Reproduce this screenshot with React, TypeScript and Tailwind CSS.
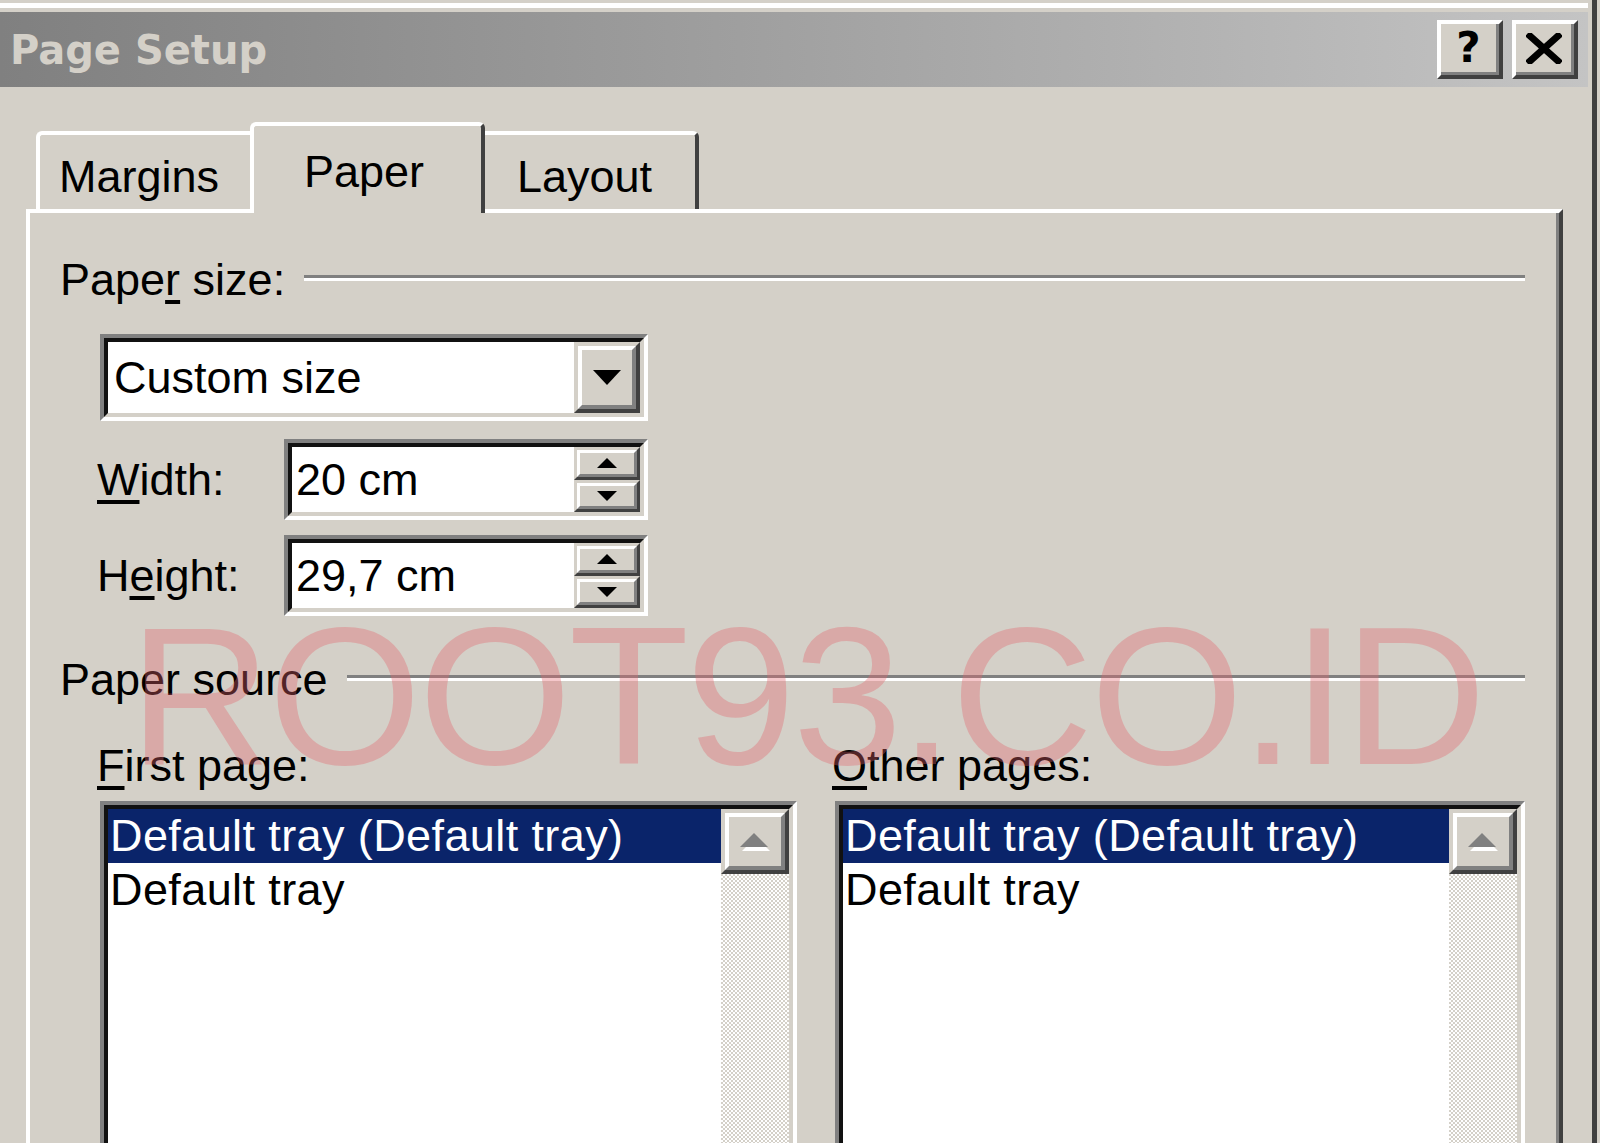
import React from 'react';

const sunkenOuter = 'border-4 border-t-[#808080] border-l-[#808080] border-b-white border-r-white';
const sunkenInner = 'h-full w-full border-4 border-t-[#111111] border-l-[#111111] border-b-[#d4d0c8] border-r-[#d4d0c8] bg-white flex';
const raisedOuter = 'border-4 border-t-[#d4d0c8] border-l-[#d4d0c8] border-b-[#404040] border-r-[#404040]';
const raisedInner = 'h-full w-full border-4 border-t-white border-l-white border-b-[#808080] border-r-[#808080] bg-[#d4d0c8] flex items-center justify-center';
const label = 'text-[45px] leading-none whitespace-nowrap';
const ul = 'underline decoration-[4px] underline-offset-[5px]';

function TitleBar() {
    return (
        <div className="h-[75px] shrink-0 bg-linear-to-r from-[#808080] to-[#c4c4c4] flex items-center">
            <span className="pl-[10px] font-['DejaVu_Sans',sans-serif] font-bold text-[40px] leading-none text-[#d4d0c8]">
                Page Setup
            </span>
            <div className="ml-auto mr-[10px] flex gap-[9px]">
                <div className="w-[66px] h-[59px] border-4 border-t-white border-l-white border-b-[#404040] border-r-[#404040]">
                    <div className="h-full w-full border-b-[3px] border-r-[3px] border-[#808080] bg-[#d4d0c8] flex items-center justify-center">
                        <span className="font-['DejaVu_Sans',sans-serif] font-bold text-[42px] leading-none text-black">?</span>
                    </div>
                </div>
                <div className="w-[66px] h-[59px] border-4 border-t-white border-l-white border-b-[#404040] border-r-[#404040]">
                    <div className="h-full w-full border-b-[3px] border-r-[3px] border-[#808080] bg-[#d4d0c8] flex items-center justify-center">
                        <svg width="36" height="31" viewBox="0 0 36 31">
                            <path d="M4 3 L32 28 M32 3 L4 28" stroke="#000" strokeWidth="7" strokeLinecap="square" />
                        </svg>
                    </div>
                </div>
            </div>
        </div>
    );
}

function Tabs() {
    return (
        <div className="h-[87px] shrink-0 flex items-end pl-[10px]">
            <div className="w-[214px] h-[78px] border-l-4 border-t-4 border-white rounded-tl-[6px] pl-[19px] pt-[19px]">
                <span className={label}>Margins</span>
            </div>
            <div className="relative z-10 w-[235px] h-[91px] -mb-[4px] bg-[#d4d0c8] border-l-4 border-t-4 border-l-white border-t-white border-r-4 border-r-[#404040] rounded-t-[6px] pl-[50px] pt-[23px]">
                <span className={label}>Paper</span>
            </div>
            <div className="w-[214px] h-[78px] border-t-4 border-t-white border-r-4 border-r-[#404040] rounded-tr-[6px] pl-[32px] pt-[19px]">
                <span className={label}>Layout</span>
            </div>
        </div>
    );
}

function Etched() {
    return <div className="flex-1 h-[6px] mb-[3px] border-t-[3px] border-t-[#808080] border-b-[3px] border-b-white" />;
}

function SpinField({ value }: { value: string }) {
    return (
        <div className={`${sunkenOuter} w-[364px] h-[81px]`}>
            <div className={sunkenInner}>
                <div className="flex-1 flex items-center pl-[4px]">
                    <span className={label}>{value}</span>
                </div>
                <div className="w-[66px] flex flex-col">
                    <div className="h-1/2 border-[3px] border-t-[#d4d0c8] border-l-[#d4d0c8] border-b-[#404040] border-r-[#404040]">
                        <div className="h-full w-full border-[3px] border-t-white border-l-white border-b-[#808080] border-r-[#808080] bg-[#d4d0c8] flex items-center justify-center">
                            <svg width="20" height="10" viewBox="0 0 20 10">
                                <polygon points="10,0 20,10 0,10" fill="#000" />
                            </svg>
                        </div>
                    </div>
                    <div className="h-1/2 border-[3px] border-t-[#d4d0c8] border-l-[#d4d0c8] border-b-[#404040] border-r-[#404040]">
                        <div className="h-full w-full border-[3px] border-t-white border-l-white border-b-[#808080] border-r-[#808080] bg-[#d4d0c8] flex items-center justify-center">
                            <svg width="20" height="10" viewBox="0 0 20 10">
                                <polygon points="0,0 20,0 10,10" fill="#000" />
                            </svg>
                        </div>
                    </div>
                </div>
            </div>
        </div>
    );
}

function ListBox({ className }: { className: string }) {
    return (
        <div className={`${sunkenOuter} ${className} h-[400px] shrink-0`}>
            <div className={sunkenInner}>
                <div className="flex-1 flex flex-col">
                    <div className="h-[54px] bg-[#0a246a] text-white text-[45px] leading-[54px] pl-[2px] tracking-[0.4px] whitespace-nowrap">
                        Default tray (Default tray)
                    </div>
                    <div className="h-[54px] text-[45px] leading-[54px] pl-[2px] tracking-[0.4px] whitespace-nowrap">Default tray</div>
                </div>
                <div className="w-[68px] flex flex-col">
                    <div className={`${raisedOuter} h-[65px] shrink-0`}>
                        <div className={raisedInner}>
                            <svg width="30" height="18" viewBox="0 0 30 18">
                                <polygon points="16,4 30,18 2,18" fill="#ffffff" />
                                <polygon points="14,0 28,14 0,14" fill="#808080" />
                            </svg>
                        </div>
                    </div>
                    <div className="flex-1 bg-[image:repeating-conic-gradient(#ffffff_0%_25%,#d4d0c8_0%_50%)] bg-[length:4px_4px]" />
                </div>
            </div>
        </div>
    );
}

function Panel() {
    return (
        <div className="flex-1 flex flex-col border-l-4 border-t-4 border-l-white border-t-white border-r-4 border-r-[#404040] shadow-[inset_-3px_0_0_#808080]">
            {/* Paper size */}
            <div className="mt-[44px] ml-[30px] mr-[34px] flex items-center">
                <span className={`${label} w-[244px] shrink-0`}>
                    Pape<span className={ul}>r</span> size:
                </span>
                <Etched />
            </div>

            <div className={`${sunkenOuter} mt-[32px] ml-[70px] w-[548px] h-[87px]`}>
                <div className={sunkenInner}>
                    <div className="flex-1 flex items-center pl-[6px]">
                        <span className={label}>Custom size</span>
                    </div>
                    <div className={`${raisedOuter} w-[66px]`}>
                        <div className={raisedInner}>
                            <svg width="28" height="15" viewBox="0 0 28 15">
                                <polygon points="0,0 28,0 14,15" fill="#000" />
                            </svg>
                        </div>
                    </div>
                </div>
            </div>

            <div className="mt-[18px] ml-[67px] flex items-center">
                <span className={`${label} w-[187px] shrink-0`}>
                    <span className={ul}>W</span>idth:
                </span>
                <SpinField value="20 cm" />
            </div>

            <div className="mt-[15px] ml-[67px] flex items-center">
                <span className={`${label} w-[187px] shrink-0`}>
                    H<span className={ul}>e</span>ight:
                </span>
                <SpinField value="29,7 cm" />
            </div>

            {/* Paper source */}
            <div className="mt-[41px] ml-[30px] mr-[34px] flex items-center">
                <span className={`${label} w-[287px] shrink-0`}>Paper source</span>
                <Etched />
            </div>

            <div className="mt-[41px] ml-[67px] flex">
                <span className={`${label} w-[735px] shrink-0`}>
                    <span className={ul}>F</span>irst page:
                </span>
                <span className={label}>
                    <span className={ul}>O</span>ther pages:
                </span>
            </div>

            <div className="mt-[13px] ml-[70px] flex gap-[38px]">
                <ListBox className="w-[697px]" />
                <ListBox className="w-[690px]" />
            </div>
        </div>
    );
}

export default function App() {
    return (
        <div className="relative w-[1600px] h-[1143px] overflow-hidden bg-[#d4d0c8] flex font-['Liberation_Sans',Arial,sans-serif] text-black">
            <div className="w-[1588px] shrink-0 flex flex-col">
                <div className="h-[3px] shrink-0" />
                <div className="h-[5px] shrink-0 bg-white" />
                <div className="h-[4px] shrink-0" />
                <TitleBar />
                <div className="flex-1 min-h-0 flex flex-col pl-[26px] pr-[25px] pt-[35px]">
                    <Tabs />
                    <Panel />
                </div>
            </div>
            <div className="w-[4px] shrink-0" />
            <div className="w-[5px] shrink-0 bg-[#404040]" />
            <div className="w-[3px] shrink-0" />

            {/* watermark */}
            <div className="absolute left-[129px] top-[598px] z-20 pointer-events-none text-[197px] leading-none tracking-[-3px] text-[rgba(226,100,108,0.36)] whitespace-nowrap">
                ROOT93.CO.ID
            </div>
        </div>
    );
}
